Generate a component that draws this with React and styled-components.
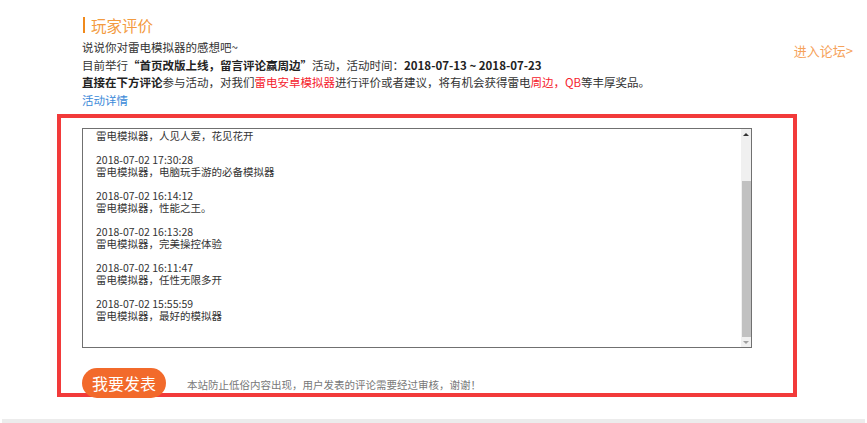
import React from "react";
import styled, { createGlobalStyle } from "styled-components";

const Global = createGlobalStyle`
  html, body { margin: 0; padding: 0; background: #fff; }
  body { font-family: "Noto Sans CJK SC", "Noto Sans", sans-serif; color: #333; }
`;

const Page = styled.div`
  width: 867px;
  height: 423px;
  overflow: hidden;
  display: flex;
  flex-direction: column;
`;

const Header = styled.header`
  display: flex;
  align-items: flex-start;
  justify-content: space-between;
  padding: 15px 14px 0 82px;
`;

const Intro = styled.div`
  display: flex;
  flex-direction: column;
`;

const Title = styled.h2`
  margin: 0 0 4px 1px;
  height: 20px;
  display: flex;
  align-items: center;
  font-size: 15.5px;
  font-weight: 400;
  line-height: 20px;
  color: #f39b3f;
  &::before {
    content: "";
    width: 2px;
    height: 16px;
    margin-right: 6px;
    background: #f08a1c;
  }
`;

const Line = styled.p`
  margin: 0;
  font-size: 11.5px;
  line-height: 17.5px;
  color: #333;
  white-space: nowrap;
`;

const Strong = styled.b`
  font-weight: 700;
  color: #222;
`;

const Quote = styled.span`
  display: inline-block;
  width: 1em;
  text-align: ${(p) => (p.$close ? "left" : "right")};
`;

const Red = styled.span`
  color: #f5222d;
`;

const BlueLink = styled.a`
  color: #3b8ad9;
  text-decoration: none;
`;

const ForumLink = styled.a`
  margin-top: 27px;
  font-size: 13px;
  line-height: 18px;
  color: #f6a25a;
  text-decoration: none;
`;

const Highlight = styled.section`
  margin: 5px 0 0 57px;
  width: 740px;
  box-sizing: border-box;
  border: 4px solid #f23a3a;
  padding: 10px 0 0 21px;
`;

const Box = styled.div`
  width: 670px;
  height: 220px;
  box-sizing: border-box;
  border: 1px solid #707070;
  display: flex;
  background: #fff;
`;

const Comments = styled.div`
  flex: 1;
  overflow: hidden;
  display: flex;
  flex-direction: column;
  justify-content: flex-end;
  padding: 0 0 25px 13px;
  font-size: 10.5px;
  line-height: 12px;
  color: #333;
`;

const Entry = styled.div`
  margin-bottom: ${(p) => (p.$last ? 0 : 12)}px;
`;

const Scrollbar = styled.div`
  width: 10px;
  background: #f0f0f0;
  display: flex;
  flex-direction: column;
  align-items: center;
`;

const Arrow = styled.div`
  height: 10px;
  width: 10px;
  display: flex;
  align-items: center;
  justify-content: center;
  &::after {
    content: "";
    border-left: 3px solid transparent;
    border-right: 3px solid transparent;
    ${(p) =>
      p.$down
        ? "border-top: 3px solid #a0a0a0;"
        : "border-bottom: 3px solid #333;"}
  }
`;

const Thumb = styled.div`
  margin-top: auto;
  width: 9px;
  background: #c1c1c1;
`;

const Footer = styled.div`
  display: flex;
  align-items: center;
  gap: 21px;
  margin: 20px 0 -5px 0;
  height: 30px;
`;

const PostButton = styled.button`
  height: 30px;
  padding: 0 10px;
  border: none;
  border-radius: 15px;
  background: #f26a2b;
  color: #fff;
  font-family: "Noto Sans CJK SC", sans-serif;
  font-size: 16px;
  line-height: 30px;
  cursor: pointer;
`;

const Notice = styled.span`
  font-size: 10.5px;
  color: #777;
  padding-top: 2px;
`;

const BottomRule = styled.div`
  margin: 22px 2px 0;
  height: 4px;
  background: #ececec;
`;

const comments = [
  { time: "2018-07-02 17:41:05", text: "雷电模拟器，人见人爱，花见花开" },
  { time: "2018-07-02 17:30:28", text: "雷电模拟器，电脑玩手游的必备模拟器" },
  { time: "2018-07-02 16:14:12", text: "雷电模拟器，性能之王。" },
  { time: "2018-07-02 16:13:28", text: "雷电模拟器，完美操控体验" },
  { time: "2018-07-02 16:11:47", text: "雷电模拟器，任性无限多开" },
  { time: "2018-07-02 15:55:59", text: "雷电模拟器，最好的模拟器" },
];

export default function App() {
  return (
    <Page>
      <Global />
      <Header>
        <Intro>
          <Title>玩家评价</Title>
          <Line>说说你对雷电模拟器的感想吧~</Line>
          <Line>
            目前举行
            <Strong>
              <Quote>“</Quote>首页改版上线，留言评论赢周边<Quote $close>”</Quote>
            </Strong>
            活动，活动时间：
            <Strong>2018-07-13 ~ 2018-07-23</Strong>
          </Line>
          <Line>
            <Strong>直接在下方评论</Strong>参与活动，对我们<Red>雷电安卓模拟器</Red>
            进行评价或者建议，将有机会获得雷电<Red>周边，QB</Red>等丰厚奖品。
          </Line>
          <Line>
            <BlueLink href="#">活动详情</BlueLink>
          </Line>
        </Intro>
        <ForumLink href="#">进入论坛&gt;</ForumLink>
      </Header>
      <Highlight>
        <Box>
          <Comments>
            {comments.map((c, i) => (
              <Entry key={c.time} $last={i === comments.length - 1}>
                <div>{c.time}</div>
                <div>{c.text}</div>
              </Entry>
            ))}
          </Comments>
          <Scrollbar>
            <Arrow />
            <Thumb style={{ height: 156 }} />
            <Arrow $down />
          </Scrollbar>
        </Box>
        <Footer>
          <PostButton>我要发表</PostButton>
          <Notice>本站防止低俗内容出现，用户发表的评论需要经过审核，谢谢！</Notice>
        </Footer>
      </Highlight>
      <BottomRule />
    </Page>
  );
}
